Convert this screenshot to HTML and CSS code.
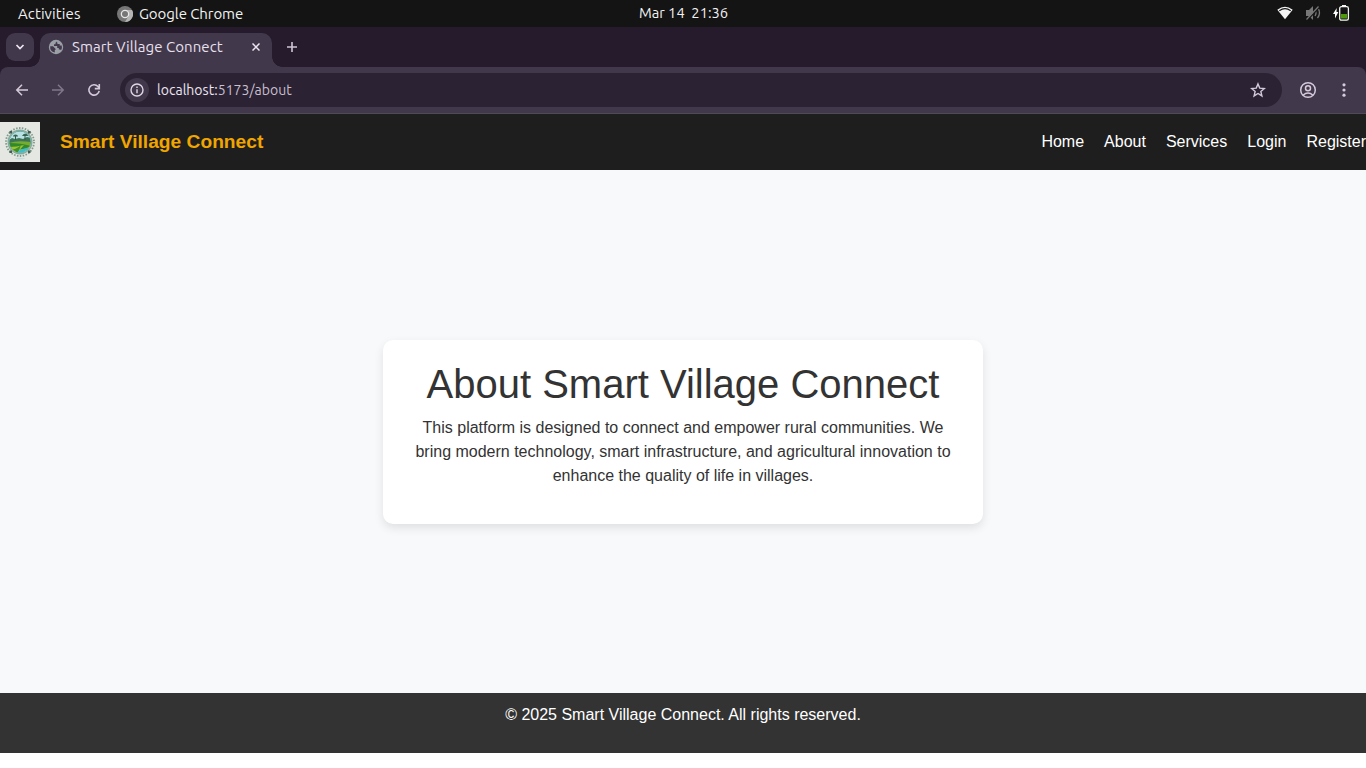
FILE: index.html
```html
<!DOCTYPE html>
<html lang="en">
<head>
<meta charset="utf-8">
<title>Smart Village Connect</title>
<link rel="stylesheet" href="styles.css">
</head>
<body>
<div class="system-bar">
  <div class="system-left">
    <span class="activities">Activities</span>
    <svg class="app-icon" width="16" height="16" viewBox="0 0 16 16"><circle cx="8" cy="8" r="8" fill="#777"/><path d="M8 4h7a8 8 0 0 1-7 12l3.500-6z" fill="#b4b4b4"/><circle cx="8" cy="8" r="4.300" fill="#e8e8e8"/><circle cx="8" cy="8" r="3" fill="#777"/></svg>
    <span class="app-name">Google Chrome</span>
  </div>
  <div class="clock">Mar 14&nbsp; 21:36</div>
  <div class="system-right">
    <svg class="wifi" width="16" height="14" viewBox="0 0 16 14"><path d="M.3 3.800Q8-2.500 15.700 3.800L8 13.200z" fill="#f5f5f5"/><path d="M2.300 4.700Q8 .5 13.700 4.700" fill="none" stroke="#151515" stroke-width="1.100"/></svg>
    <svg class="mute" width="16" height="16" viewBox="0 0 16 16"><path d="M1 5h3l4-4v14l-4-4H1z" fill="#777"/><path d="M10 5q2 3 0 6M12.500 2.500q4 5.500 0 10.500" stroke="#777" stroke-width="1.300" fill="none"/><path d="M2.500 15L14.500 2" stroke="#151515" stroke-width="1.600"/><path d="M1.500 14.500L13.500 1.500" stroke="#777" stroke-width="1.200"/></svg>
    <svg class="battery" width="18" height="16" viewBox="0 0 18 16"><path d="M4.700 3L1 9h2v4.500L6.300 7H4.500z" fill="#fff"/><rect x="7.700" y="1.700" width="8.700" height="13.500" rx="1.700" fill="none" stroke="#f5f5f5" stroke-width="1.300"/><path d="M10 0h4v2h-4z" fill="#f5f5f5"/><path d="M9 9h6v4.500H9z" fill="#4e9a06"/></svg>
  </div>
</div>
<div class="tab-strip">
  <div class="tab-search"><svg width="10" height="8" viewBox="0 0 10 8"><path d="M1.500 2L5 5.500 8.500 2" fill="none" stroke="#eee5f2" stroke-width="1.700"/></svg></div>
  <div class="tab">
    <svg width="16" height="16" viewBox="0 0 16 16"><circle cx="8" cy="8" r="7.200" fill="#9aa0a6"/><path d="M9 2.500L7.500 3.800v1.500H6V7h3.200v2h1.600v1.500h1.400l.9.700a6 6 0 0 0 .6-4.700h-2V5H9.500zM2.200 7.300H5L7.500 9.800V11H6.800v2.600A5.900 5.900 0 0 1 2.200 7.300z" fill="#42384b"/></svg>
    <span class="tab-title">Smart Village Connect</span>
    <svg class="tab-close" width="8" height="8" viewBox="0 0 8 8"><path d="M.5.5l7 7M7.500.5l-7 7" stroke="#eee5f2" stroke-width="1.500"/></svg>
  </div>
  <svg class="new-tab" width="12" height="12" viewBox="0 0 12 12"><path d="M6 1v10M1 6h10" stroke="#cfc5d6" stroke-width="1.600"/></svg>
</div>
<div class="toolbar-wrap">
<div class="toolbar">
  <svg class="back" width="14" height="14" viewBox="0 0 14 14"><path d="M13 7H2M7 1.800L1.800 7 7 12.200" fill="none" stroke="#d4cadb" stroke-width="1.500"/></svg>
  <svg class="forward" width="14" height="14" viewBox="0 0 14 14"><path d="M1 7h11M7 1.800L12.200 7 7 12.200" fill="none" stroke="#81778a" stroke-width="1.500"/></svg>
  <svg class="reload" width="14" height="14" viewBox="0 0 14 14"><path d="M12.200 7.800A5.200 5.200 0 1 1 11 3.500L12.200 5M12.300 1v4.600H7.800" fill="none" stroke="#d4cadb" stroke-width="1.600"/></svg>
  <div class="address">
    <div class="site-info"><svg width="14" height="14" viewBox="0 0 14 14"><circle cx="7" cy="7" r="6" fill="none" stroke="#e0d7e5" stroke-width="1.400"/><path d="M7 6.200v4M7 3.500v1.500" stroke="#e0d7e5" stroke-width="1.400"/></svg></div>
    <span class="url"><span class="host">localhost:</span>5173/about</span>
    <svg class="star" width="16" height="16" viewBox="0 0 16 16"><path d="M8 1.900l1.750 4.200 4.550.4-3.450 3 1.050 4.400L8 11.500l-3.900 2.400 1.050-4.400-3.450-3 4.550-.4z" fill="none" stroke="#d4cadb" stroke-width="1.400"/></svg>
  </div>
  <svg class="profile" width="18" height="18" viewBox="0 0 18 18" fill="none" stroke="#d4cadb" stroke-width="1.500"><circle cx="9" cy="9" r="7.300"/><circle cx="9" cy="7.200" r="2.500"/><path d="M4 14.200q5-4.300 10 0"/></svg>
  <svg class="menu" width="4" height="14" viewBox="0 0 4 14" fill="#d4cadb"><circle cx="2" cy="1.800" r="1.600"/><circle cx="2" cy="7" r="1.600"/><circle cx="2" cy="12.200" r="1.600"/></svg>
</div>
</div>
<header class="navbar">
  <svg width="40" height="40" viewBox="0 0 40 40">
    <defs><clipPath id="scene"><circle cx="20" cy="20" r="10.500"/></clipPath></defs>
    <rect width="40" height="40" fill="#e4e7e2"/>
    <ellipse cx="20" cy="36.500" rx="5" ry=".7" fill="#c3dbdc"/>
    <circle cx="20" cy="20" r="14" fill="none" stroke="#7f9a8c" stroke-width="1.800" stroke-dasharray="1.500 1.432"/>
    <circle cx="20" cy="20" r="11.800" fill="#d7e4dc" stroke="#8aa897" stroke-width="1.400"/>
    <circle cx="20" cy="20" r="10.600" fill="none" stroke="#3b9c9d" stroke-width="1"/>
    <g clip-path="url(#scene)"><path d="M9 9h22v22H9z" fill="#b9e0e2"/><path d="M9 18l3-2 3 1 4-1 4 1 4-2 4 1v6H9z" fill="#3d7357"/><path d="M13 14.500q0-2 2.500-2t2.500 2zM22 14q1-2.500 3.500-2.500T28 14z" fill="#3b6553"/><path d="M15 14h1v4h-1zM24.500 13h1v5h-1z" fill="#31594b"/><path d="M9 21q8-3 22-1v8H9z" fill="#76ad31"/><path d="M9 21q12 0 22 3l-7 3H9z" fill="#32882d"/><path d="M9 25q8 0 15-2l-7 8H9z" fill="#9cc52b"/><path d="M9 28q7 0 12-5l-3 8H9z" fill="#438f29"/><path d="M17 31q2-5 14-5v6z" fill="#3ebdc9"/></g>
    <path d="M9.500 9h2.500v2.500h-2.500zM28 9h2.500v2.500H28zM9.500 28.500h2.500V31h-2.500zM28 28.500h2.500V31H28z" fill="#425d56"/>
  </svg>
  <span class="brand">Smart Village Connect</span>
  <nav class="links"><a>Home</a><a>About</a><a>Services</a><a>Login</a><a>Register</a></nav>
</header>
<main class="about">
  <section class="card">
    <h1>About Smart Village Connect</h1>
    <p>This platform is designed to connect and empower rural communities. We bring modern technology, smart infrastructure, and agricultural innovation to enhance the quality of life in villages.</p>
  </section>
</main>
<footer class="footer">© 2025 Smart Village Connect. All rights reserved.</footer>
</body>
</html>
```
FILE: styles.css
```css
* { box-sizing: border-box; }
body { margin: 0; height: 768px; overflow: hidden; background: #fff; color: #333; font: 16px/24px "Liberation Sans", Arial, sans-serif; }
svg { display: block; flex: none; }
.system-bar, .tab-strip, .toolbar { font-family: Ubuntu, "Noto Sans", sans-serif; white-space: nowrap; }
.system-bar { height: 27px; background: #141414; color: #f2f2f2; display: grid; grid-template-columns: 1fr auto 1fr; align-items: center; font-size: 15px; line-height: 27px; }
.system-left { display: flex; align-items: center; padding-left: 18px; }
.activities { width: 99px; letter-spacing: .1px; }
.app-icon { margin-right: 6px; }
.app-name { letter-spacing: -.08px; }
.clock { font-size: 14.667px; padding-left: 1px; line-height: 25px; padding-bottom: 2px; }
.system-right { display: flex; align-items: center; justify-content: flex-end; padding-right: 16px; margin-top: -2px; }
.mute { margin-left: 12px; }
.battery { margin-left: 11px; }
.tab-strip { height: 40px; background: #251b2d; display: flex; padding: 6px 6px 0; }
.tab-search { width: 28px; height: 28px; border-radius: 9px; background: #42384b; display: flex; align-items: center; justify-content: center; margin-right: 6px; }
.tab { position: relative; width: 232px; height: 34px; border-radius: 10px 10px 0 0; background: #42384b; display: flex; align-items: center; padding: 0 12px 6px 8px; color: #e9e0ee; font-size: 15px; }
.tab::before, .tab::after { content: ""; position: absolute; bottom: 0; width: 10px; height: 10px; }
.tab::before { left: -10px; background: radial-gradient(circle at 0 0, transparent 9.5px, #42384b 10px); }
.tab::after { right: -10px; background: radial-gradient(circle at 100% 0, transparent 9.5px, #42384b 10px); }
.tab-title { margin-left: 8px; letter-spacing: .06px; }
.tab-close { margin-left: auto; }
.new-tab { margin: 8px 0 0 14px; }
.toolbar-wrap { background: #251b2d; }
.toolbar { height: 47px; border-bottom: 1px solid #514957; border-radius: 8px 8px 0 0; background: #42384b; display: flex; align-items: center; padding: 0 20px 0 15px; }
.forward { margin-left: 22px; }
.reload { margin-left: 22px; }
.address { width: 1162px; height: 34px; margin-left: 19px; border-radius: 17px; background: #2b2333; display: flex; align-items: center; padding: 0 16px 0 5px; font-size: 14px; color: #c9bfcf; }
.site-info { width: 24px; height: 24px; border-radius: 50%; background: #42384b; display: flex; align-items: center; justify-content: center; margin-right: 8px; }
.url { letter-spacing: .03px; }
.host { color: #eee5f2; }
.star { margin-left: auto; }
.profile { margin-left: 17px; }
.menu { margin-left: auto; }
.navbar { height: 56px; background: #1e1e1e; display: flex; align-items: center; }
.brand { margin-left: 20px; color: #f0a500; font-size: 19.2px; font-weight: bold; }
.links { margin-left: auto; display: flex; gap: 20px; color: #fff; }
.about { height: 523px; background: #f8f9fb; padding-top: 170px; }
.card { width: 600px; height: 184px; margin: 0 auto; padding: 20px; border-radius: 10px; background: #fff; box-shadow: 0 4px 10px rgba(0,0,0,.1); text-align: center; }
.card h1 { margin: 0 0 8px; font-size: 40px; line-height: 48px; font-weight: 400; }
.card p { margin: 0 0 16px; }
.footer { height: 60px; background: #333; color: #fff; padding-top: 10px; text-align: center; }
```
